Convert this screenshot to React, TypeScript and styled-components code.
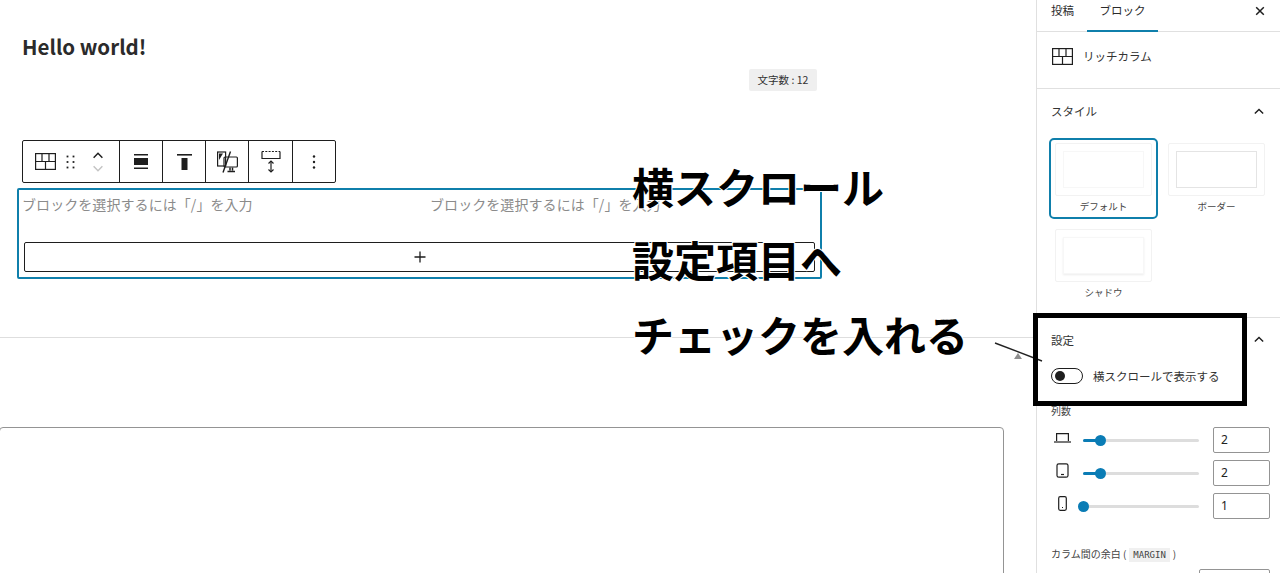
import React from "react";
import styled, { createGlobalStyle } from "styled-components";

const Global = createGlobalStyle`
  html, body { margin: 0; padding: 0; background: #fff; overflow: hidden; }
  * { box-sizing: border-box; }
  body { font-family: "Noto Sans CJK JP", "Noto Sans", sans-serif; color: #1e1e1e; }
`;

const Page = styled.div`
  position: relative;
  display: grid;
  grid-template-columns: 1036px 244px;
  width: 1280px;
  height: 573px;
  overflow: hidden;
`;
const Main = styled.main`
  display: flex;
  flex-direction: column;
  height: 573px;
  overflow: hidden;
  & > * { flex: none; }
`;
const Title = styled.h1`
  margin: 0;
  height: 69px;
  padding: 31px 0 0 22px;
  font: 700 20.5px/30px "Noto Sans CJK JP", sans-serif;
  color: #2b2b2b;
`;
const CounterRow = styled.div`
  display: flex;
  height: 71px;
  padding-left: 749px;
  align-items: flex-start;
`;
const Counter = styled.span`
  width: 68px;
  height: 22px;
  background: #efefef;
  border-radius: 2px;
  font-size: 10.5px;
  line-height: 22px;
  text-align: center;
  color: #333;
`;
const Toolbar = styled.div`
  display: flex;
  width: 314px;
  height: 43px;
  margin-left: 22px;
  border: 1px solid #1e1e1e;
  border-radius: 2px;
  background: #fff;
`;
const ToolGroup = styled.div<{ $w: number; $last?: boolean }>`
  display: flex;
  align-items: center;
  justify-content: center;
  width: ${(p) => p.$w}px;
  flex: none;
  border-right: ${(p) => (p.$last ? "0" : "1px solid #1e1e1e")};
`;
const BlockTools = styled(ToolGroup)`
  justify-content: flex-start;
  padding-left: 12px;
  gap: 10px;
`;
const Movers = styled.div`
  display: flex;
  flex-direction: column;
  align-items: center;
  gap: 6px;
  margin-left: 7px;
`;
const Block = styled.div`
  width: 805px;
  height: 91px;
  margin: 5px 0 0 17px;
  border: 2px solid #0f7fab;
  border-radius: 2px;
  padding: 4px 3px 0 3px;
`;
const Columns = styled.div`
  display: grid;
  grid-template-columns: 408px 1fr;
  height: 48px;
`;
const Placeholder = styled.span`
  font-size: 14px;
  line-height: 20px;
  letter-spacing: 0.07px;
  color: #8b8b8b;
  white-space: nowrap;
`;
const Appender = styled.div`
  display: flex;
  align-items: center;
  justify-content: center;
  width: 791px;
  height: 30px;
  margin-left: 2px;
  border: 1px solid #1e1e1e;
  border-radius: 2px;
`;
const Divider = styled.hr`
  margin: 58px 0 0;
  border: 0;
  border-top: 1px solid #dedede;
  width: 1036px;
`;
const MarkerRow = styled.div`
  display: flex;
  justify-content: flex-end;
  height: 89px;
  padding: 15px 14px 0 0;
`;
const Marker = styled.div`
  width: 0;
  height: 0;
  border-left: 4px solid transparent;
  border-right: 4px solid transparent;
  border-bottom: 6px solid #8f8f8f;
`;
const LowerBox = styled.div`
  width: 1005px;
  height: 300px;
  margin-left: -1px;
  border: 1px solid #949494;
  border-radius: 4px;
`;

const Side = styled.aside`
  height: 573px;
  border-left: 1px solid #e0e0e0;
  overflow: hidden;
`;
const Tabs = styled.div`
  display: flex;
  align-items: flex-start;
  height: 32px;
  border-bottom: 1px solid #e0e0e0;
  padding-left: 14px;
`;
const Tab = styled.div<{ $active?: boolean; $w: number }>`
  width: ${(p) => p.$w}px;
  height: 32px;
  font-size: 11.5px;
  line-height: 20px;
  color: #2b2b2b;
  text-align: ${(p) => (p.$active ? "center" : "left")};
  border-bottom: ${(p) => (p.$active ? "2px solid #0f7fab" : "0")};
`;
const CloseBtn = styled.div`
  margin: 6px 0 0 auto;
  padding-right: 15px;
  line-height: 0;
`;
const BlockCard = styled.div`
  display: flex;
  align-items: center;
  gap: 10px;
  height: 57px;
  padding: 0 0 8px 15px;
  border-bottom: 1px solid #e0e0e0;
  font-size: 11.5px;
  color: #333;
`;
const Section = styled.section`
  padding: 0 16px 0 14px;
`;
const SectionHead = styled.div<{ $h: number }>`
  display: flex;
  justify-content: space-between;
  align-items: center;
  height: ${(p) => p.$h}px;
  font-size: 11.5px;
  color: #333;
`;
const StyleGrid = styled.div`
  display: grid;
  grid-template-columns: 109px 109px;
  column-gap: 4px;
  row-gap: 5px;
  margin: 5px 0 0 -2px;
`;
const StyleOption = styled.div<{ $selected?: boolean }>`
  height: 81px;
  border: 2px solid ${(p) => (p.$selected ? "#0f7fab" : "transparent")};
  border-radius: 5px;
  padding: 3px 4px 0;
  font-size: 9.5px;
  text-align: center;
  color: #444;
`;
const Preview = styled.div`
  display: flex;
  align-items: center;
  justify-content: center;
  height: 53px;
  border: 1px solid #f2f2f2;
  border-radius: 2px;
  margin-bottom: 3px;
`;
const PreviewInner = styled.div<{ $v: "plain" | "border" | "shadow" }>`
  width: 81px;
  height: 37px;
  border: 1px solid ${(p) => (p.$v === "border" ? "#e4e4e4" : "#f7f7f7")};
  box-shadow: ${(p) => (p.$v === "shadow" ? "0 1px 2px #ececec" : "none")};
`;
const SettingsSection = styled.section`
  border-top: 1px solid #e0e0e0;
  margin-top: 12px;
  padding: 0 10px 0 14px;
`;
const SettingsHead = styled(SectionHead)`
  padding-right: 6px;
`;
const ToggleRow = styled.div`
  display: flex;
  align-items: center;
  gap: 10px;
  height: 16px;
  margin-top: 7px;
  font-size: 11.5px;
  color: #333;
`;
const Toggle = styled.div`
  display: flex;
  align-items: center;
  width: 32px;
  height: 16px;
  padding-left: 3px;
  border: 1px solid #1e1e1e;
  border-radius: 8px;
`;
const Knob = styled.div`
  width: 10px;
  height: 10px;
  border-radius: 50%;
  background: #1e1e1e;
`;
const SmallLabel = styled.div`
  margin: 19px 0 8px;
  height: 16px;
  font-size: 10px;
  line-height: 16px;
  color: #444;
`;
const SliderRow = styled.div`
  display: grid;
  grid-template-columns: 32px 116px 71px;
  align-items: center;
  height: 26px;
  margin-bottom: 7px;
`;
const SliderIcon = styled.div`
  display: flex;
  justify-content: center;
  line-height: 0;
  padding: 0 10px 5px 0;
`;
const Track = styled.div`
  position: relative;
  height: 3px;
  background: #ddd;
  border-radius: 2px;
`;
const Fill = styled.div`
  height: 3px;
  background: #0a7cb5;
  border-radius: 2px;
`;
const Thumb = styled.div`
  position: absolute;
  top: -4px;
  width: 11px;
  height: 11px;
  margin-left: -5px;
  border-radius: 50%;
  background: #0a7cb5;
`;
const NumberBox = styled.div`
  justify-self: end;
  width: 57px;
  height: 26px;
  border: 1px solid #949494;
  border-radius: 2px;
  padding-left: 7px;
  font: 12px/24px "Noto Sans", sans-serif;
  color: #222;
`;
const MarginLabel = styled.div`
  margin-top: 27px;
  font-size: 10px;
  line-height: 16px;
  color: #444;
`;
const Code = styled.code`
  margin: 0 3px;
  padding: 2px 4px;
  background: #f0f0f0;
  font: 9px "DejaVu Sans Mono", monospace;
`;
const MarginInput = styled.div`
  width: 71px;
  height: 30px;
  margin: 7px 0 0 148px;
  border: 1px solid #949494;
  border-radius: 2px;
`;

const Note = styled.div<{ $top: number }>`
  position: absolute;
  left: 632px;
  top: ${(p) => p.$top}px;
  font: 700 42px/50px "Noto Sans CJK JP", sans-serif;
  color: #000;
  white-space: nowrap;
  -webkit-text-stroke: 2px #fff;
  paint-order: stroke fill;
`;
const Highlight = styled.div`
  position: absolute;
  left: 1033px;
  top: 313px;
  width: 214px;
  height: 93px;
  border: 5px solid #000;
`;
const Pointer = styled.svg`
  position: absolute;
  left: 990px;
  top: 338px;
`;

const stroke = { fill: "none", stroke: "#1e1e1e", strokeWidth: 1.2 };

const GridIcon = () => (
  <svg width="21" height="17" viewBox="0 0 21 17" {...stroke}>
    <rect x="0.6" y="0.6" width="19.8" height="15.8" />
    <path d="M0.6 8.5H20.4M7 0.6V8.5M14 0.6V8.5M10.5 8.5V16.4" />
  </svg>
);
const Dots = () => (
  <svg width="9" height="14" viewBox="0 0 9 14" fill="#1e1e1e">
    {[1.5, 7, 12.5].flatMap((y) => [1.5, 7.5].map((x) => <rect key={`${x}${y}`} x={x - 0.9} y={y - 0.9} width="1.8" height="1.8" />))}
  </svg>
);
const Chevron = ({ up, color, w = 12 }: { up?: boolean; color: string; w?: number }) => (
  <svg width={w} height="7" viewBox="0 0 12 8" fill="none" stroke={color} strokeWidth="1.7">
    <path d={up ? "M1 6.5L6 1.5L11 6.5" : "M1 1.5L6 6.5L11 1.5"} />
  </svg>
);
const AlignWide = () => (
  <svg width="14" height="15" viewBox="0 0 14 15" fill="#1e1e1e">
    <rect x="0" y="0" width="14" height="1.5" />
    <rect x="0" y="4" width="14" height="7" />
    <rect x="0" y="13.5" width="14" height="1.5" />
  </svg>
);
const AlignTop = () => (
  <svg width="15" height="16" viewBox="0 0 15 16" fill="#1e1e1e">
    <rect x="0" y="0" width="15" height="1.6" />
    <rect x="4.5" y="4" width="6" height="12" />
  </svg>
);
const Responsive = () => (
  <svg width="21" height="22" viewBox="0 0 21 22" fill="none" stroke="#1e1e1e" strokeWidth="1.2">
    <rect x="0.6" y="1" width="8" height="14" fill="#fff" />
    <path d="M2 2.5H6L2 9Z" fill="#1e1e1e" stroke="none" />
    <rect x="7" y="6" width="13.4" height="10" rx="1" />
    <path d="M10.5 20.5H18M13 16.5V19.5M15.5 16.5V19.5" strokeWidth="1.5" />
    <path d="M13.5 0.5L6 21.5" strokeWidth="1.4" />
  </svg>
);
const HeightIcon = () => (
  <svg width="20" height="23" viewBox="0 0 20 23" fill="none" stroke="#1e1e1e" strokeWidth="1.2">
    <path d="M1 1.5H19" strokeDasharray="2 1.3" />
    <path d="M1 1.5V8.5H19V1.5" />
    <path d="M10 11V21.5" />
    <path d="M7.5 13.5L10 11L12.5 13.5M7.5 19.5L10 22L12.5 19.5" />
  </svg>
);
const MoreIcon = () => (
  <svg width="4" height="14" viewBox="0 0 4 14" fill="#1e1e1e">
    <circle cx="2" cy="1.5" r="1.2" />
    <circle cx="2" cy="7" r="1.2" />
    <circle cx="2" cy="12.5" r="1.2" />
  </svg>
);
const Plus = () => (
  <svg width="12" height="12" viewBox="0 0 12 12" stroke="#1e1e1e" strokeWidth="1.3">
    <path d="M6 0.5V11.5M0.5 6H11.5" />
  </svg>
);
const Close = () => (
  <svg width="10" height="10" viewBox="0 0 10 10" stroke="#1e1e1e" strokeWidth="1.5">
    <path d="M1.2 1.2L8.8 8.8M8.8 1.2L1.2 8.8" />
  </svg>
);
const Laptop = () => (
  <svg width="17" height="12" viewBox="0 0 17 12" fill="none" stroke="#1e1e1e" strokeWidth="1.2">
    <path d="M2.6 9V1.6H14.4V9" />
    <path d="M0 10H17" />
  </svg>
);
const Tablet = () => (
  <svg width="13" height="15" viewBox="0 0 13 15" fill="none" stroke="#1e1e1e" strokeWidth="1.2">
    <rect x="1" y="0.8" width="11" height="13.4" rx="1.8" />
    <path d="M5 11.5H8" />
  </svg>
);
const Phone = () => (
  <svg width="9" height="15" viewBox="0 0 9 15" fill="none" stroke="#1e1e1e" strokeWidth="1.2">
    <rect x="0.7" y="0.7" width="7.6" height="13.6" rx="1.5" />
    <path d="M4 11.5H5" />
  </svg>
);

const sliders = [
  { icon: <Laptop />, pct: 15, value: "2" },
  { icon: <Tablet />, pct: 15, value: "2" },
  { icon: <Phone />, pct: 0, value: "1" },
];

export default function App() {
  return (
    <Page>
      <Global />
      <Main>
        <Title>Hello world!</Title>
        <CounterRow>
          <Counter>文字数 : 12</Counter>
        </CounterRow>
        <Toolbar>
          <BlockTools $w={97}>
            <GridIcon />
            <Dots />
            <Movers>
              <Chevron up color="#1e1e1e" />
              <Chevron color="#c4c4c4" />
            </Movers>
          </BlockTools>
          <ToolGroup $w={43}><AlignWide /></ToolGroup>
          <ToolGroup $w={43}><AlignTop /></ToolGroup>
          <ToolGroup $w={43}><Responsive /></ToolGroup>
          <ToolGroup $w={44}><HeightIcon /></ToolGroup>
          <ToolGroup $w={42} $last><MoreIcon /></ToolGroup>
        </Toolbar>
        <Block>
          <Columns>
            <Placeholder>ブロックを選択するには「/」を入力</Placeholder>
            <Placeholder>ブロックを選択するには「/」を入力</Placeholder>
          </Columns>
          <Appender><Plus /></Appender>
        </Block>
        <Divider />
        <MarkerRow><Marker /></MarkerRow>
        <LowerBox />
      </Main>
      <Side>
        <Tabs>
          <Tab $w={36}>投稿</Tab>
          <Tab $w={71} $active>ブロック</Tab>
          <CloseBtn><Close /></CloseBtn>
        </Tabs>
        <BlockCard>
          <GridIcon />
          リッチカラム
        </BlockCard>
        <Section>
          <SectionHead $h={44}>
            スタイル
            <Chevron up color="#1e1e1e" w={10} />
          </SectionHead>
          <StyleGrid>
            <StyleOption $selected>
              <Preview><PreviewInner $v="plain" /></Preview>
              デフォルト
            </StyleOption>
            <StyleOption>
              <Preview><PreviewInner $v="border" /></Preview>
              ボーダー
            </StyleOption>
            <StyleOption>
              <Preview><PreviewInner $v="shadow" /></Preview>
              シャドウ
            </StyleOption>
          </StyleGrid>
        </Section>
        <SettingsSection>
          <SettingsHead $h={43}>
            設定
            <Chevron up color="#1e1e1e" w={10} />
          </SettingsHead>
          <ToggleRow>
            <Toggle><Knob /></Toggle>
            横スクロールで表示する
          </ToggleRow>
          <SmallLabel>列数</SmallLabel>
          {sliders.map((s, i) => (
            <SliderRow key={i}>
              <SliderIcon>{s.icon}</SliderIcon>
              <Track>
                <Fill style={{ width: `${s.pct}%` }} />
                <Thumb style={{ left: `${s.pct}%` }} />
              </Track>
              <NumberBox>{s.value}</NumberBox>
            </SliderRow>
          ))}
          <MarginLabel>カラム間の余白 (<Code>MARGIN</Code>)</MarginLabel>
          <MarginInput />
        </SettingsSection>
      </Side>
      <Note $top={161}>横スクロール</Note>
      <Note $top={234}>設定項目へ</Note>
      <Note $top={309}>チェックを入れる</Note>
      <Pointer width="56" height="28" viewBox="0 0 56 28" fill="none" stroke="#222" strokeWidth="1.4">
        <path d="M5 5L52 23" />
      </Pointer>
      <Highlight />
    </Page>
  );
}
